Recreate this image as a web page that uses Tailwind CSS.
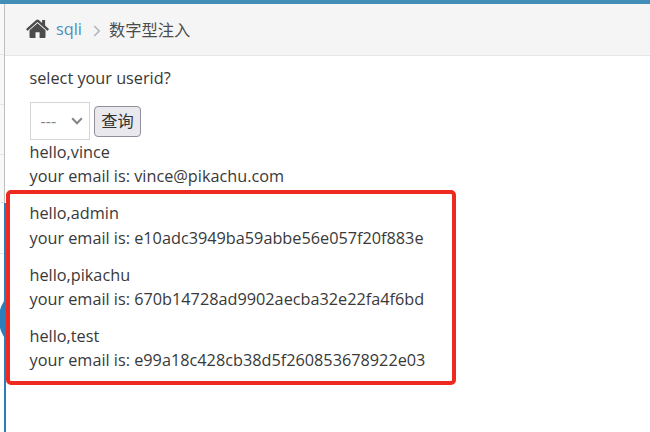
<!DOCTYPE html>
<html lang="zh">
<head>
<meta charset="utf-8">
<title>数字型注入</title>
<script src="https://cdn.jsdelivr.net/npm/@tailwindcss/browser@4"></script>
</head>
<body class="relative flex h-[432px] w-[650px] flex-col overflow-hidden bg-white font-['Open_Sans','Noto_Sans_CJK_SC',sans-serif] text-[16.25px] leading-[24.4px] text-[#393939]">
<div class="h-1 shrink-0 bg-[#438eb9]"></div>
<div class="flex min-h-0 flex-1">
  <aside class="flex w-[6px] shrink-0 flex-col">
    <div class="flex h-[199px] w-[5px] flex-col border-r border-[#bfbfbf] bg-[#f8f8f8]">
      <div class="h-[51px] border-b border-[#e5e5e5]"></div>
      <div class="h-[50px] border-b border-[#e5e5e5]"></div>
      <div class="h-[50px] border-b border-[#e5e5e5]"></div>
      <div class="h-[48px] border-b border-[#e5e5e5]"></div>
    </div>
    <div class="flex flex-1 flex-col border-r-2 border-[#2b7dbc] bg-white">
      <div class="h-[51px] border-b border-[#e5e5e5]"></div>
      <svg class="mt-[47px] h-[36px] w-1" viewBox="0 0 4 36"><path d="M4 0v36Q1 31 0 27V9Q1 5 4 0z" fill="#2b7dbc"/></svg>
    </div>
  </aside>
  <main class="-ml-px flex-1">
    <nav class="flex h-[52px] items-center border-b border-[#e5e5e5] bg-[#f5f5f5] pl-[21px]">
      <svg class="-mt-[2px] h-[19px] w-[23px]" viewBox="0 0 23 18" preserveAspectRatio="none" fill="#4c4c4c"><path d="M11.5 4.1 19.5 10.7V17q0 1-1 1H13.6V12.5H9.5V18H4.5q-1 0-1-1V10.7z"/><path d="M.4 9.2 10.2 1q1.3-1 2.6 0L16.1 3.7V1h3V6.2l3.6 3q.4.4 0 .8l-.8.9q-.4.4-.8 0L11.5 2.9 2 10.9q-.4.4-.8 0L.4 10q-.4-.4 0-.8z"/></svg>
      <a class="ml-[7px] w-[26px] text-[#4c8fbd]">sqli</a>
      <svg class="ml-[11px] mt-[3px] h-[12px] w-[8px]" viewBox="0 0 8 12" fill="none" stroke="#b2b6bf" stroke-width="1.7"><path d="M1.2 1 6.2 6 1.2 11"/></svg>
      <span class="ml-[8px] mt-px text-[#4c4c4c]">数字型注入</span>
    </nav>
    <section class="pl-[24.5px] pt-[10px]">
      <p class="mb-[12px] h-6">select your userid?</p>
      <form class="flex h-[38px] items-start gap-1">
        <div class="flex h-[38px] w-[60.5px] items-center justify-between border border-[#d5d5d5] pl-[10px] pr-[6px] text-[#858585]"><span>---</span>
          <svg class="h-[8px] w-[12px]" viewBox="0 0 12 8" fill="none" stroke="#858585" stroke-width="2"><path d="M1.2 1.2 6 6.2l4.800-5"/></svg>
        </div>
        <button type="button" class="mt-1 h-[31px] w-[47px] rounded-[4px] border border-[#8f8f9d] bg-[#e9e9ed] text-[16.25px] leading-none text-[#333]">查询</button>
      </form>
      <p class="mb-[12.5px]">hello,vince<br>your email is: vince@pikachu.com</p>
      <p class="mb-[12.5px]">hello,admin<br>your email is: e10adc3949ba59abbe56e057f20f883e</p>
      <p class="mb-[12.5px]">hello,pikachu<br>your email is: 670b14728ad9902aecba32e22fa4f6bd</p>
      <p>hello,test<br>your email is: e99a18c428cb38d5f260853678922e03</p>
    </section>
  </main>
</div>
<div class="absolute left-[6px] top-[190px] h-[195px] w-[450px] rounded-[5px] border-4 border-[#ee2a20]"></div>
</body>
</html>
